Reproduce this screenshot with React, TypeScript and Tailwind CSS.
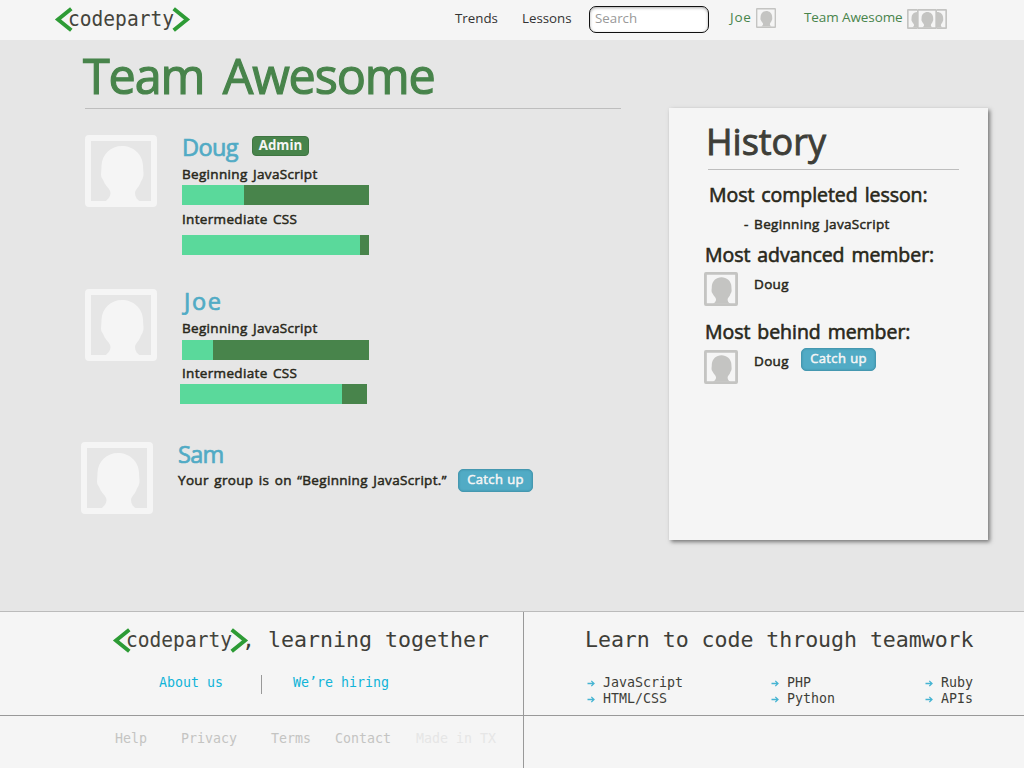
import type { ReactNode } from "react";

function Logo() {
  return (
    <svg className="block h-[25px] w-[135px] shrink-0 overflow-visible" viewBox="0 0 135 25">
      <g fill="none" stroke="#2d9b35" strokeWidth="3.9">
        <path d="M16.3 1.8 L3 12.5 L16.3 23.2" />
        <path d="M118.7 1.8 L132 12.5 L118.7 23.2" />
      </g>
      <text
        x="13"
        y="19"
        textLength="106"
        lengthAdjust="spacingAndGlyphs"
        fontFamily="'DejaVu Sans Mono', monospace"
        fontSize="21.5"
        fill="#44443c"
      >
        codeparty
      </text>
    </svg>
  );
}

function Avatar({ className, frame = 6 }: { className: string; frame?: number }) {
  return (
    <svg className={`block shrink-0 ${className}`} viewBox="0 0 72 72" fill="currentColor">
      <path
        fillRule="evenodd"
        d={`M4 0H68Q72 0 72 4V68Q72 72 68 72H4Q0 72 0 68V4Q0 0 4 0Z M${frame} ${frame}V${72 - frame}H${72 - frame}V${frame}Z`}
      />
      <path d="M37 11C48 11 57.5 19 58 30C58 34 58.5 36 58.5 39C58.5 44 56 45 55 49C53 53 50 55 50 58C50 62 52 65 56 67L19 67C23 65 25.5 61 25.5 58C25.5 54 20.5 51 19 47C18 44 16 43 16 40C16 36 16.5 35 16.5 31C17 19 26 11 37 11Z" />
    </svg>
  );
}

function Name({ children, className }: { children: ReactNode; className: string }) {
  return (
    <h2 className={`text-[23.5px] leading-8 text-[#51abc5] [-webkit-text-stroke:0.7px_#51abc5] ${className}`}>
      {children}
    </h2>
  );
}

function Course({ children, className = "" }: { children: ReactNode; className?: string }) {
  return (
    <p
      className={`whitespace-nowrap text-[13.5px] leading-5 tracking-[0.33px] [word-spacing:1.6px] text-[#29281b] [-webkit-text-stroke:0.5px_#29281b] ${className}`}
    >
      {children}
    </p>
  );
}

function Progress({ done, className = "" }: { done: number; className?: string }) {
  return (
    <div className={`h-5 w-[187px] bg-[#48844b] ${className}`}>
      <div className="h-full bg-[#5ad99b]" style={{ width: done }} />
    </div>
  );
}

function CatchUp() {
  return (
    <button className="h-[23px] w-[75px] shrink-0 rounded-[5px] border border-[#4598b0] bg-[#51abc5] pb-[2px] text-[13px] leading-[19px] tracking-[0.4px] text-[#f5f5f5] shadow-[inset_0_0_2px_#3d8ba3] [-webkit-text-stroke:0.5px_#f5f5f5]">
      Catch up
    </button>
  );
}

function Topic({ children }: { children: ReactNode }) {
  return (
    <li className="flex items-center gap-2">
      <svg className="h-[7px] w-2" viewBox="0 0 8 7" fill="none" stroke="#45b4d2" strokeWidth="1.3">
        <path d="M0.5 3.5H7M4.3 0.9L7 3.5L4.3 6.1" />
      </svg>
      {children}
    </li>
  );
}

const subheading =
  "whitespace-nowrap text-[19.5px] leading-7 tracking-[-0.05px] [word-spacing:2px] text-[#29281b] [-webkit-text-stroke:0.6px_#29281b]";

export default function App() {
  return (
    <div className="flex h-[768px] w-[1024px] flex-col overflow-hidden bg-[#e6e6e6] font-['Open_Sans',sans-serif]">
      <header className="flex h-10 shrink-0 items-start bg-[#f5f5f5] pl-[55px] text-[13.3px] leading-5 text-[#333]">
        <div className="pt-[7px]">
          <Logo />
        </div>
        <nav className="ml-[265px] flex pt-2">
          <a className="w-[67px]">Trends</a>
          <a className="w-[67px]">Lessons</a>
        </nav>
        <div className="mt-[6px] h-[27px] w-[120px] rounded-[7px] border-[1.5px] border-[#111] bg-white pl-[5px] pt-[1px] text-[#999] shadow-[inset_0_1px_3px_#aaa]">
          Search
        </div>
        <a className="ml-[21px] w-[26px] pt-[7px] text-[13.5px] tracking-[0.8px] text-[#48844b]">Joe</a>
        <Avatar className="mt-2 size-5 text-[#c4c4c2]" frame={5} />
        <a className="ml-[28px] w-[103px] whitespace-nowrap pt-[7px] text-[13.5px] tracking-[-0.1px] text-[#48844b]">
          Team Awesome
        </a>
        <div className="mt-[9px] flex text-[#c4c4c2]">
          <div className="w-[10px] overflow-hidden">
            <Avatar className="size-5" />
          </div>
          <Avatar className="size-5" />
          <div className="flex w-[10px] justify-end overflow-hidden">
            <Avatar className="size-5" />
          </div>
        </div>
      </header>

      <main className="flex h-[571px] shrink-0">
        <section className="w-[669px] shrink-0 pl-[85px] pt-1">
          <h1 className="-ml-[2px] whitespace-nowrap pt-px text-[48.5px] leading-[60px] tracking-[-1.15px] [word-spacing:7px] text-[#48844b] [-webkit-text-stroke:1.2px_#48844b]">
            Team Awesome
          </h1>
          <hr className="mt-[3px] h-px w-[536px] border-0 bg-[#bebebe]" />

          <article className="mt-[22px] flex gap-[25px]">
            <Avatar className="mt-1 size-[72px] text-[#f5f5f5] blur-[0.5px]" />
            <div>
              <div className="flex">
                <div className="w-[70px]">
                  <Name className="tracking-[-0.6px]">Doug</Name>
                </div>
                <span className="mt-[5px] h-5 w-[57px] rounded-[4px] border border-[#3f7542] bg-[#48844b] text-center text-[13.3px] font-bold leading-[17px] text-[#f5f5f5]">
                  Admin
                </span>
              </div>
              <Course className="mt-px">Beginning JavaScript</Course>
              <Progress done={62} className="mt-px" />
              <Course className="mt-1">Intermediate CSS</Course>
              <Progress done={178} className="mt-[6px]" />
            </div>
          </article>

          <article className="mt-[30px] flex gap-[25px]">
            <Avatar className="mt-1 size-[72px] text-[#f5f5f5] blur-[0.5px]" />
            <div>
              <Name className="pl-[2px] tracking-[1.6px]">Joe</Name>
              <Course className="mt-px">Beginning JavaScript</Course>
              <Progress done={31} className="mt-[2px]" />
              <Course className="mt-[3px]">Intermediate CSS</Course>
              <Progress done={162} className="-ml-[2px] mt-px" />
            </div>
          </article>

          <article className="-ml-1 mt-[34px] flex gap-[25px]">
            <Avatar className="mt-1 size-[72px] text-[#f5f5f5] blur-[0.5px]" />
            <div>
              <Name className="tracking-[-0.7px]">Sam</Name>
              <div className="-mt-px flex">
                <Course className="mt-px w-[280px]">Your group is on “Beginning JavaScript.”</Course>
                <CatchUp />
              </div>
            </div>
          </article>
        </section>

        <aside className="mt-[68px] h-[432px] w-[319px] bg-[#f5f5f5] pl-[35px] shadow-[2px_2px_4px_#777]">
          <h1 className="ml-[2px] mt-[10px] text-[36px] leading-[48px] text-[#3e3e38] [-webkit-text-stroke:0.9px_#3e3e38]">
            History
          </h1>
          <hr className="ml-1 mt-[3px] h-px w-[251px] border-0 bg-[#bebebe]" />
          <h3 className={`${subheading} ml-[5px] mt-[11px]`}>Most completed lesson:</h3>
          <Course className="ml-[40px] mt-[5px]">- Beginning JavaScript</Course>
          <h3 className={`${subheading} ml-px mt-[7px]`}>Most advanced member:</h3>
          <div className="mt-[3px] flex h-[34px]">
            <Avatar className="size-[34px] text-[#c4c4c2]" />
            <Course className="ml-[16px] mt-[2px]">Doug</Course>
          </div>
          <h3 className={`${subheading} ml-px mt-[12px]`}>Most behind member:</h3>
          <div className="mt-[2px] flex">
            <Avatar className="mt-[2px] size-[34px] text-[#c4c4c2]" />
            <Course className="ml-[16px] mt-[3px] w-[47px]">Doug</Course>
            <CatchUp />
          </div>
        </aside>
      </main>

      <footer className="flex grow flex-col border-t border-[#bbb] bg-[#f5f5f5] font-['DejaVu_Sans_Mono',monospace] text-[13.29px] leading-4 text-[#3e3e38]">
        <div className="flex h-[104px] shrink-0 border-b border-[#999]">
          <section className="w-[524px] border-r border-[#999] pl-[113px] pt-4">
            <div className="flex text-[21.6px] leading-6">
              <Logo />
              <p className="-ml-[6px] whitespace-pre">, learning together</p>
            </div>
            <div className="mt-[21px] flex h-5 text-[#10b4d8]">
              <a className="ml-[46px] w-[102px] pt-px">About us</a>
              <div className="mt-[1px] h-[19px] w-px bg-[#999]" />
              <a className="ml-[31px] pt-px">We’re hiring</a>
            </div>
          </section>
          <section className="pl-[61px] pt-4">
            <h2 className="whitespace-nowrap text-[21.6px] leading-6 tracking-[-0.05px]">Learn to code through teamwork</h2>
            <div className="ml-[2px] mt-[23px] flex">
              <ul className="w-[184px]">
                <Topic>JavaScript</Topic>
                <Topic>HTML/CSS</Topic>
              </ul>
              <ul className="w-[154px]">
                <Topic>PHP</Topic>
                <Topic>Python</Topic>
              </ul>
              <ul>
                <Topic>Ruby</Topic>
                <Topic>APIs</Topic>
              </ul>
            </div>
          </section>
        </div>
        <div className="flex w-[524px] grow border-r border-[#999] pl-[115px] pt-[15px] text-[#c4c4c2]">
          <a className="w-[66px]">Help</a>
          <a className="w-[90px]">Privacy</a>
          <a className="w-[64px]">Terms</a>
          <a className="w-[81px]">Contact</a>
          <span className="whitespace-nowrap text-[#e6e6e6]">Made in TX</span>
        </div>
      </footer>
    </div>
  );
}
